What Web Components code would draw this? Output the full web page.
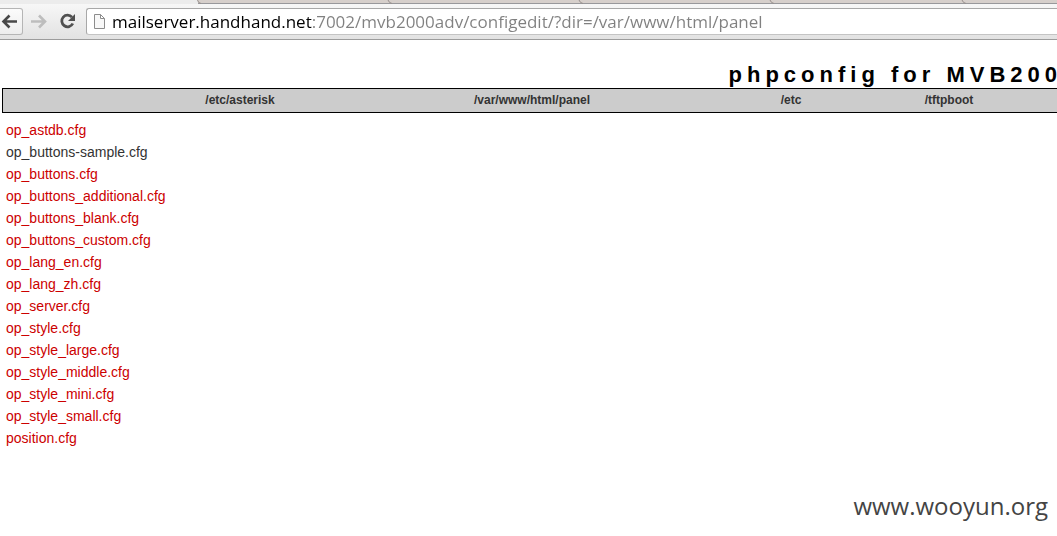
<!DOCTYPE html>
<html lang="en">
<head>
<meta charset="utf-8">
<title>phpconfig</title>
<style>
html, body { margin: 0; background: #fff; }
body { font-family: "Liberation Sans", Arial, sans-serif; overflow-x: hidden; }
</style>
</head>
<body>
<config-page></config-page>
<script>
function define(name, html) {
  const template = document.createElement('template');
  template.innerHTML = html;
  customElements.define(name, class extends HTMLElement {
    constructor() {
      super();
      this.attachShadow({ mode: 'open' }).append(template.content.cloneNode(true));
    }
  });
}

define('tab-strip', `
<style>
:host { display: block; height: 3px; background: #d6cfcb; border-bottom: 1px solid #98989b; position: relative; }
.lead { width: 198px; height: 4px; background: #ececec; }
svg { position: absolute; left: 0; top: 0; }
</style>
<div class="lead"></div>
<svg width="1057" height="4" aria-hidden="true" fill="none" stroke="#98908e">
<path d="M197.500 0Q198 3 201 3.500M388 0Q389 3 392 3.500M579 0Q580 3 583 3.500M770 0Q771 3 774 3.500M962 0Q963 3 966 3.500"/></svg>`);

define('browser-bar', `
<style>
:host { display: flex; height: 35px; align-items: flex-start; background: linear-gradient(#f7f7f7, #e2e2e2); border-bottom: 1px solid #9c9c9c; }
button { margin: 4px 0 0; padding: 0; border: 0; background: none; height: 27px; box-sizing: border-box; }
svg { display: block; }
.back { width: 23px; border: 1px solid #b5b5b5; border-left: 0; border-radius: 0 3px 3px 0; background: linear-gradient(#fbfbfb, #ededed); }
.forward { width: 31px; }
.reload { width: 28px; }
form { flex: 1; min-width: 0; margin: 4px 0 0 4px; height: 27px; box-sizing: border-box; display: flex; align-items: center; gap: 6px; padding-left: 6px; background: #fff; border: 1px solid #a8a8a8; border-bottom-color: #c4c4c4; border-right: 0; border-radius: 3px 0 0 3px; }
/* the host name is black and the rest of the address grey */
input { flex: 1; min-width: 0; height: 25px; padding: 0; border: 0; outline: 0; font: 17px/25px "Open Sans", "Noto Sans", sans-serif; color: #808080;
  background: linear-gradient(90deg, #000 200px, #808080 200px); -webkit-background-clip: text; background-clip: text; -webkit-text-fill-color: transparent; }
</style>
<button class="back" aria-label="Back"><svg width="22" height="25" viewBox="0 0 22 25" fill="none" stroke="#484848" stroke-width="2.600"><path d="M17 12.500H4M9.500 6.500L3.500 12.500L9.500 18.500"/></svg></button>
<button class="forward" aria-label="Forward" disabled><svg width="31" height="27" viewBox="0 0 31 27" fill="none" stroke="#bdbdbd" stroke-width="2.600"><path d="M8 13.500H21M16 7.500L22 13.500L16 19.500"/></svg></button>
<button class="reload" aria-label="Reload"><svg width="28" height="27" viewBox="0 0 28 27"><path d="M18 9.200A5.800 5.800 0 1 0 18.800 15.500" fill="none" stroke="#505050" stroke-width="2.800"/><path d="M21 6V13H14Z" fill="#505050"/></svg></button>
<form><svg width="13" height="17" viewBox="0 0 13 17" fill="#f8f8f8" stroke="#8c8c8c"><path d="M1.500 1.500H7.500L11.500 5.500V15.500H1.500ZM7.500 1.500V5.500H11.500"/></svg>
<input type="text" aria-label="Address" spellcheck="false" value="mailserver.handhand.net:7002/mvb2000adv/configedit/?dir=/var/www/html/panel"></form>`);

define('page-title', `
<style>
:host { display: flex; justify-content: flex-end; padding-top: 22px; }
h1 { margin: 0 -5px 0 0; font-size: 22px; line-height: 26px; letter-spacing: 5px; white-space: nowrap; color: #000; }
</style>
<h1><slot></slot></h1>`);

define('directory-nav', `
<style>
:host { display: block; margin-left: 2px; border: 1px solid #000; border-right: 0; background: #ccc; }
nav { display: grid; grid-template-columns: 102fr 270fr 314fr 204fr 112fr 52fr; line-height: 23px; text-align: center; }
a { color: #333; font-size: 12px; font-weight: bold; text-decoration: none; }
a:first-child { grid-column: 2; }
</style>
<nav aria-label="Directories"><a href="#asterisk">/etc/asterisk</a><a href="#panel">/var/www/html/panel</a><a href="#etc">/etc</a><a href="#tftpboot">/tftpboot</a></nav>`);

define('file-link', `
<style>
:host { display: block; }
a { color: #c00; font-size: 14px; line-height: 22px; text-decoration: none; }
:host([current]) a { color: #333; }
</style>
<a href="#file"><slot></slot></a>`);

define('file-list', `
<style>
:host { display: block; padding: 6px 6px 0; }
</style>
<slot></slot>`);

define('site-mark', `
<style>
:host { display: block; padding: 40px 9px 0 0; text-align: right; font: 24px/34px "Open Sans", "Noto Sans", sans-serif; color: #444; }
</style>
<slot></slot>`);

const files = ['op_astdb', 'op_buttons-sample', 'op_buttons', 'op_buttons_additional', 'op_buttons_blank',
  'op_buttons_custom', 'op_lang_en', 'op_lang_zh', 'op_server', 'op_style', 'op_style_large',
  'op_style_middle', 'op_style_mini', 'op_style_small', 'position'];
define('config-page', `
<style>:host { display: block; overflow: hidden; }</style>
<tab-strip></tab-strip>
<browser-bar></browser-bar>
<main>
<page-title>phpconfig for MVB200</page-title>
<directory-nav></directory-nav>
<file-list>${files.map(f => `<file-link${f === 'op_buttons-sample' ? ' current' : ''}>${f}.cfg</file-link>`).join('')}</file-list>
</main>
<site-mark>www.wooyun.org</site-mark>`);
</script>
</body>
</html>
